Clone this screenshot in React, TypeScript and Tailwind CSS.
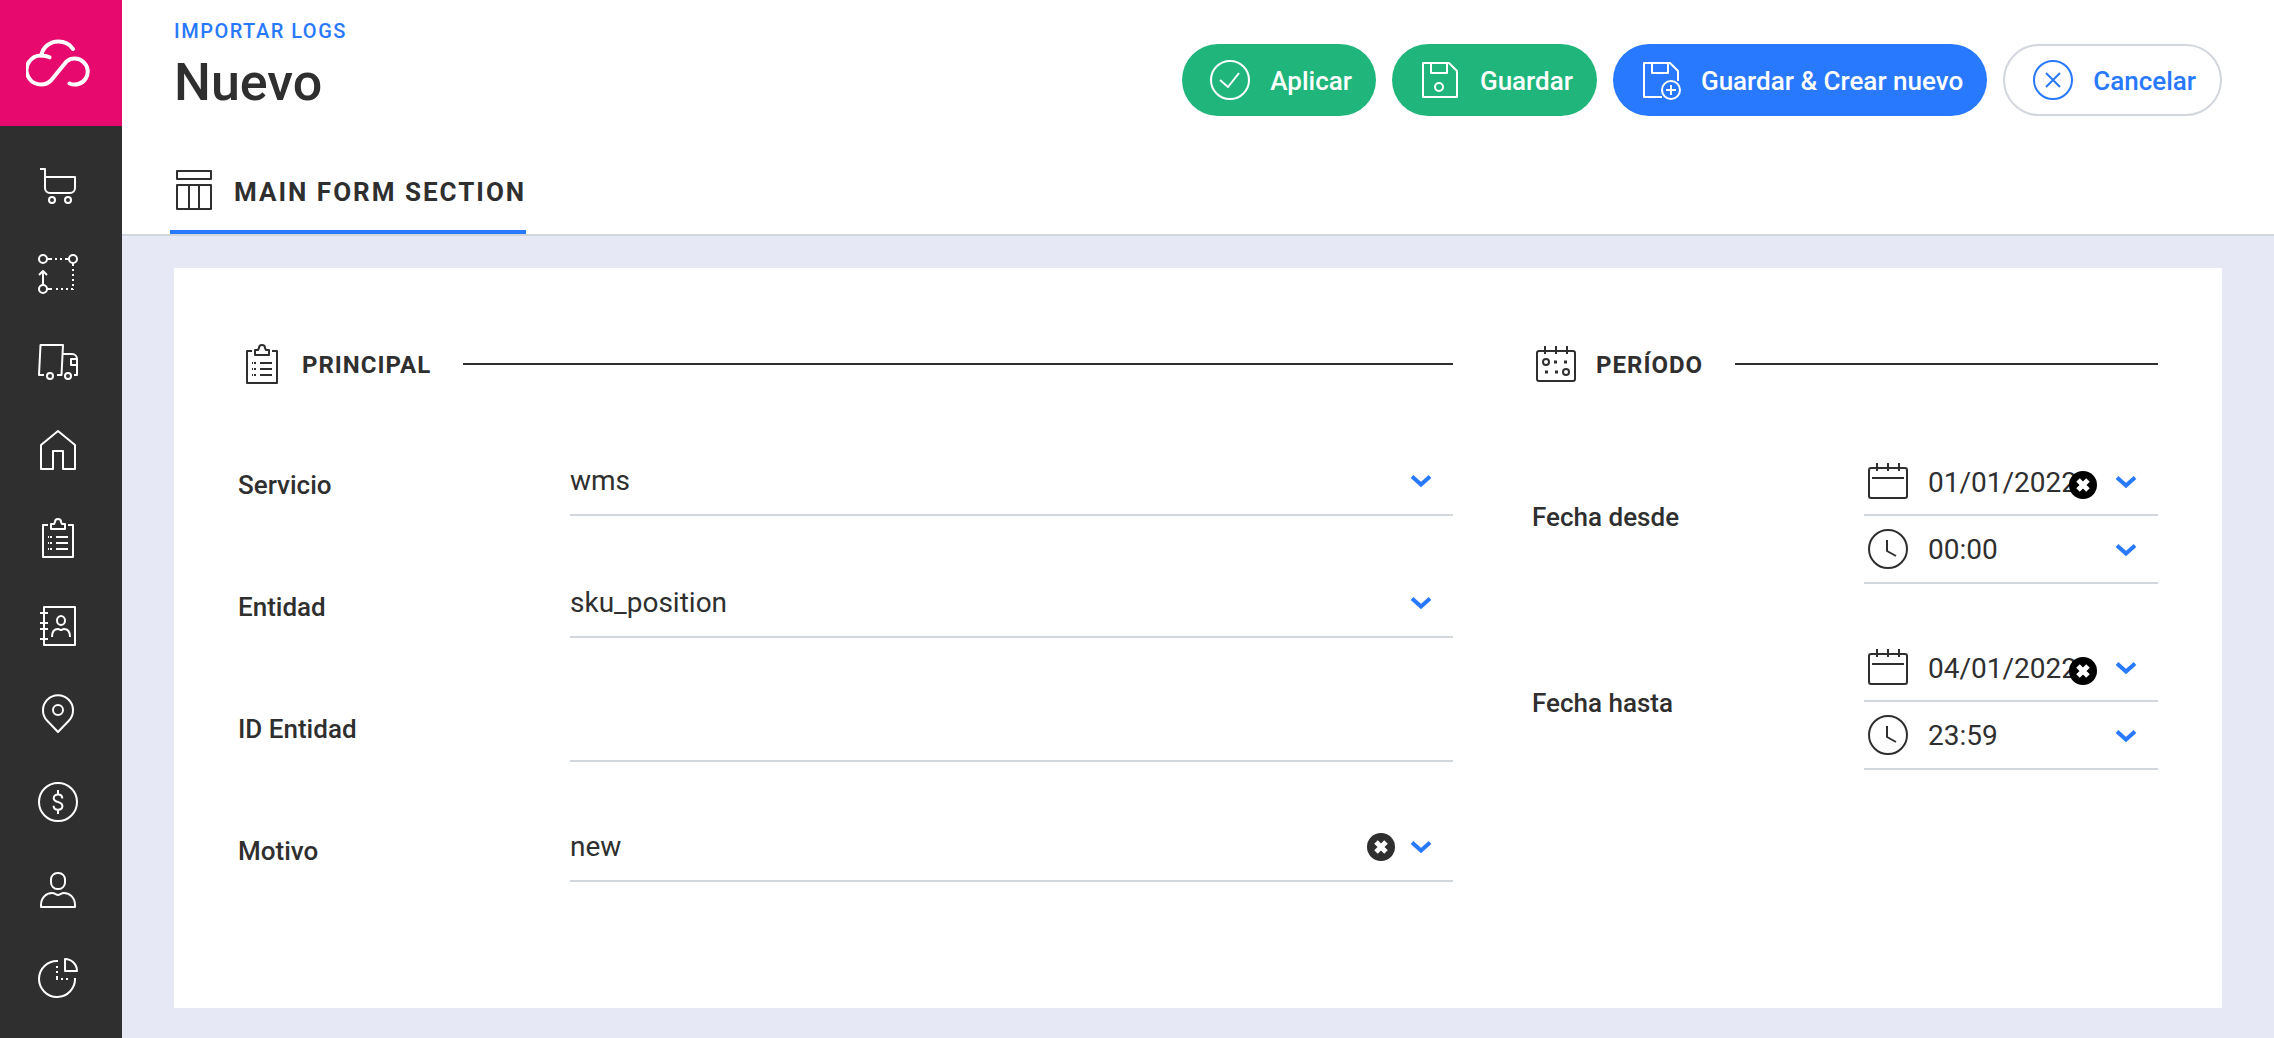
import React from 'react';
import clsx from 'clsx';

type IconProps = { className?: string; children?: React.ReactNode };

const Icon = ({ className, children }: IconProps) => (
  <svg
    viewBox="0 0 40 40"
    fill="none"
    stroke="currentColor"
    strokeWidth={2}
    strokeLinejoin="round"
    aria-hidden="true"
    className={clsx('size-10 shrink-0', className)}
  >
    {children}
  </svg>
);

const CartIcon = () => (
  <Icon>
    <path d="M2 3h5v19a5 5 0 0 0 5 5h20a5 5 0 0 0 5-5V11H7" />
    <circle cx="14" cy="34" r="3" />
    <circle cx="30" cy="34" r="3" />
  </Icon>
);

const RouteIcon = () => (
  <Icon>
    <circle cx="5" cy="5" r="4" />
    <circle cx="35" cy="5" r="4" />
    <circle cx="5" cy="35" r="4" />
    <path d="M9 5h22" strokeDasharray="5 3 2 3 2 3 6" />
    <path d="M35 9v27" strokeDasharray="3 3 2 3 2 3 2 3 2 3 2" />
    <path d="M9 35h27" strokeDasharray="5 4 2 3 2 3 2 3 2" />
    <path d="M5 31V17M1 21l4-4 4 4" />
  </Icon>
);

const TruckIcon = () => (
  <Icon>
    <path d="M6 33H1L2.5 3H25l-1.5 30H19M25 12h9a5 5 0 0 1 5 5v16h-3M39 17h-6v6h6" />
    <circle cx="12" cy="34" r="3" />
    <circle cx="30" cy="34" r="3" />
  </Icon>
);

const HouseIcon = () => (
  <Icon>
    <path d="M20 1 3 15v24h12V21h10v18h12V15z" />
  </Icon>
);

const ClipboardIcon = () => (
  <Icon>
    <path d="M10 7H5v32h30V7h-5" />
    <path d="M13 11V6h3l1-2a3 3 0 0 1 6 0l1 2h3v5z" />
    <path d="M10 19h1M12 19h2M10 25h1M12 25h2M10 31h1M12 31h2M18 19h12M18 25h12M18 31h12" />
  </Icon>
);

const ContactsIcon = () => (
  <Icon>
    <path d="M6 1h31v38H6zM2 7h8M2 17h8M2 23h8M2 33h8" />
    <ellipse cx="23" cy="14.5" rx="4" ry="4.5" />
    <path d="M14 31c0-5 2-8 6-8 1.500 0 2 1 3 1s1.500-1 3-1c4 0 6 3 6 8" />
  </Icon>
);

const PinIcon = () => (
  <Icon>
    <path d="M20 38 9 26.500A15 15 0 1 1 31 26.500z" />
    <circle cx="20" cy="16" r="5" />
  </Icon>
);

const MoneyIcon = () => (
  <Icon>
    <circle cx="20" cy="20" r="19" />
    <path d="M24.300 16.500c0-2.500-1.800-4-4.300-4s-4.300 1.400-4.300 3.700c0 5 8.700 2.600 8.700 7.800 0 2.300-1.800 3.700-4.400 3.700s-4.400-1.500-4.400-4M20 8v4.500M20 27.500V32" />
  </Icon>
);

const UserIcon = () => (
  <Icon>
    <rect x="13" y="3" width="14" height="16" rx="6.500" />
    <path d="M3 37v-2C3 28 8 23 14 23c3 0 4 2 6 2s3-2 6-2c6 0 11 5 11 12v2z" />
  </Icon>
);

const PieIcon = () => (
  <Icon>
    <path d="M20 3A18 18 0 1 0 37 20" />
    <path d="M27 1a12 12 0 0 1 12 12H27z" />
    <path d="M19 8v14" strokeDasharray="2 3" />
    <path d="M18 21h14" strokeDasharray="2 3" />
  </Icon>
);

const CheckIcon = () => (
  <Icon>
    <circle cx="20" cy="20" r="19" />
    <path d="m10 20 8 7 11-14" />
  </Icon>
);

const SaveIcon = () => (
  <Icon>
    <path d="M3 3h26l8 8v26H3zM11 3v10h16V3" />
    <circle cx="19" cy="27" r="4" />
  </Icon>
);

const SaveNewIcon = () => (
  <Icon>
    <path d="M21 37H3V3h26l8 8v10M11 3v10h16V3" />
    <circle cx="30" cy="30" r="9" />
    <path d="M25 30h10M30 25v10" />
  </Icon>
);

const CancelIcon = () => (
  <Icon>
    <circle cx="20" cy="20" r="19" />
    <path d="m13 13 14 14M27 13 13 27" />
  </Icon>
);

const TableIcon = () => (
  <Icon>
    <path d="M3 1h34v8H3zM3 15h34v24H3zM15 15v24M25 15v24" />
  </Icon>
);

const PeriodIcon = () => (
  <Icon>
    <rect x="1" y="7" width="38" height="30" rx="2" />
    <path d="M9 2v8M20 2v8M31 2v8" />
    <circle cx="10" cy="18" r="3" />
    <circle cx="30" cy="28" r="3" />
    <path d="M18 18h3M28 18h3M9 28h3M19 28h3" strokeWidth={3} />
  </Icon>
);

const CalendarIcon = () => (
  <Icon>
    <rect x="1" y="7" width="38" height="30" rx="2" />
    <path d="M9 2v8M20 2v8M31 2v8M4 17h32" />
  </Icon>
);

const ClockIcon = () => (
  <Icon>
    <circle cx="20" cy="20" r="19" />
    <path d="M19 11v11l9 5" />
  </Icon>
);

const Chevron = () => (
  <svg viewBox="0 0 22 14" fill="none" className="pointer-events-none absolute right-[21px] top-1/2 h-[14px] w-[22px] -translate-y-[6px] text-[#2979ff]">
    <path d="m2 2.500 9 8 9-8" stroke="currentColor" strokeWidth={4} />
  </svg>
);

const ClearButton = ({ label, className }: { label: string; className: string }) => (
  <button type="button" aria-label={label} className={clsx('absolute size-7', className)}>
    <svg viewBox="0 0 28 28" className="size-7">
      <circle cx="14" cy="14" r="14" fill="currentColor" />
      <path d="m9 9 10 10M19 9 9 19" stroke="#fff" strokeWidth={5} />
    </svg>
  </button>
);

const menuItems = [
  { title: 'Ventas', icon: CartIcon },
  { title: 'Rutas', icon: RouteIcon },
  { title: 'Transporte', icon: TruckIcon },
  { title: 'Almacén', icon: HouseIcon },
  { title: 'Tareas', icon: ClipboardIcon },
  { title: 'Contactos', icon: ContactsIcon },
  { title: 'Ubicaciones', icon: PinIcon },
  { title: 'Finanzas', icon: MoneyIcon },
  { title: 'Usuarios', icon: UserIcon },
  { title: 'Reportes', icon: PieIcon },
];

const actions = [
  { title: 'Aplicar', icon: CheckIcon, style: 'bg-[#20b67b] text-white' },
  { title: 'Guardar', icon: SaveIcon, style: 'bg-[#20b67b] text-white' },
  { title: 'Guardar & Crear nuevo', icon: SaveNewIcon, style: 'bg-[#2979ff] text-white' },
  { title: 'Cancelar', icon: CancelIcon, style: 'border-2 border-[#d2d6dd] bg-white text-[#2979ff]' },
];

const Sidebar = () => (
  <aside className="flex w-[122px] shrink-0 flex-col bg-[#2f2f2f] text-white">
    <a href="#" aria-label="Inicio" className="flex h-[126px] items-center justify-center bg-[#e8096e] pr-[6px]">
      <svg viewBox="26 39 64 48" fill="none" stroke="currentColor" strokeWidth={4} strokeLinecap="round" className="h-12 w-16">
        <path d="M41.500 54.500C42.500 46 50 40.500 58.500 40.500c6 0 12 3 14.500 7.500" transform="translate(0 1)" />
        <path d="M49.500 57.300c-2-1-4.500-1.800-8-1.800a14.500 14.500 0 1 0 9.500 25l15.500-19a13 13 0 1 1 3 22" />
      </svg>
    </a>
    <nav className="flex flex-col pt-4">
      {menuItems.map((item) => (
        <a key={item.title} href="#" aria-label={item.title} className="flex h-[88px] items-center justify-center pr-[6px]">
          <item.icon />
        </a>
      ))}
    </nav>
  </aside>
);

const Header = () => (
  <header className="border-b-2 border-[#d2d6dd] bg-white px-[52px]">
    <div className="flex items-start justify-between">
      <div className="pt-[19px]">
        <a href="#" className="block text-[20px] leading-6 font-medium tracking-[0.075em] text-[#2979ff]">IMPORTAR LOGS</a>
        <h1 className="mt-2 text-[52px] leading-[64px] font-medium">Nuevo</h1>
      </div>
      <div className="flex gap-4 pt-11">
        {actions.map((action) => (
          <button
            key={action.title}
            type="button"
            className={clsx('flex h-[72px] items-center gap-5 rounded-full pr-6 pl-7 text-[26px] font-medium whitespace-nowrap', action.style)}
          >
            <action.icon />
            <span className="pt-[2px]">{action.title}</span>
          </button>
        ))}
      </div>
    </div>
    <div role="tablist" className="-ml-1 mt-[54px] flex">
      <button type="button" role="tab" aria-selected="true" className="flex items-center gap-5 border-b-4 border-[#2979ff] pb-5 pl-1 text-[26px] font-bold tracking-[2px]">
        <TableIcon />
        <span className="pt-1 leading-9">MAIN FORM SECTION</span>
      </button>
    </div>
  </header>
);

const SectionTitle = ({ icon, title }: { icon: React.ReactNode; title: string }) => (
  <div className="flex items-center gap-5 pl-1">
    {icon}
    <h2 className="pt-[2px] text-[24px] leading-9 font-bold tracking-[1px]">{title}</h2>
    <div className="ml-3 h-[2px] flex-1 bg-[#2f2f2f]" />
  </div>
);

const Row = ({ id, label, children }: { id: string; label: string; children: React.ReactNode }) => (
  <div className="flex min-h-[122px] items-start">
    <label htmlFor={id} className="flex h-[70px] w-[332px] shrink-0 items-center pt-2 text-[26px] font-medium">{label}</label>
    {children}
  </div>
);

const SelectField = ({ id, value, clearable }: { id: string; value: string; clearable?: boolean }) => (
  <div className="relative h-[70px] flex-1 border-b-2 border-[#d2d6dd] pt-[2px]">
    <select id={id} defaultValue={value} className="h-full w-full appearance-none bg-transparent text-[28px] outline-none">
      <option>{value}</option>
    </select>
    {clearable && <ClearButton label="Borrar" className="top-[21px] right-[58px]" />}
    <Chevron />
  </div>
);

const DateTimeField = ({ id, label, date, time }: { id: string; label: string; date: string; time: string }) => (
  <div className="flex items-center">
    <label htmlFor={id} className="w-[332px] shrink-0 pt-[2px] text-[26px] font-medium">{label}</label>
    <div className="min-w-0 flex-1">
      <div className="relative flex h-[68px] items-center gap-5 border-b-2 border-[#d2d6dd] pl-1">
        <CalendarIcon />
        <input id={id} type="text" defaultValue={date} className="h-full w-full min-w-0 bg-transparent pt-[2px] text-[28px] outline-none" />
        <ClearButton label="Borrar fecha" className="top-[23px] right-[61px] text-black" />
        <Chevron />
      </div>
      <div className="relative flex h-[68px] items-center gap-5 border-b-2 border-[#d2d6dd] pl-1">
        <ClockIcon />
        <select aria-label={`${label} hora`} defaultValue={time} className="h-full w-full min-w-0 appearance-none bg-transparent pt-[2px] text-[28px] outline-none">
          <option>{time}</option>
        </select>
        <Chevron />
      </div>
    </div>
  </div>
);

export default function App() {
  return (
    <div className="flex min-h-screen bg-[#e6e8f5] font-[Roboto,sans-serif] text-[#2f2f2f]">
      <Sidebar />
      <div className="flex min-w-0 flex-1 flex-col">
        <Header />
        <main className="flex flex-1 flex-col px-[52px] pt-8 pb-[30px]">
          <form className="grid flex-1 grid-cols-[66fr_34fr] gap-[79px] bg-white px-16 pt-[76px]">
            <section>
              <SectionTitle icon={<ClipboardIcon />} title="PRINCIPAL" />
              <div className="pt-[62px]">
                <Row id="servicio" label="Servicio">
                  <SelectField id="servicio" value="wms" />
                </Row>
                <Row id="entidad" label="Entidad">
                  <SelectField id="entidad" value="sku_position" />
                </Row>
                <Row id="id-entidad" label="ID Entidad">
                  <input id="id-entidad" type="text" className="h-[72px] flex-1 border-b-2 border-[#d2d6dd] text-[28px] outline-none" />
                </Row>
                <Row id="motivo" label="Motivo">
                  <SelectField id="motivo" value="new" clearable />
                </Row>
              </div>
            </section>
            <section>
              <SectionTitle icon={<PeriodIcon />} title="PERÍODO" />
              <div className="flex flex-col gap-[50px] pt-16">
                <DateTimeField id="desde" label="Fecha desde" date="01/01/2022" time="00:00" />
                <DateTimeField id="hasta" label="Fecha hasta" date="04/01/2022" time="23:59" />
              </div>
            </section>
          </form>
        </main>
      </div>
    </div>
  );
}
